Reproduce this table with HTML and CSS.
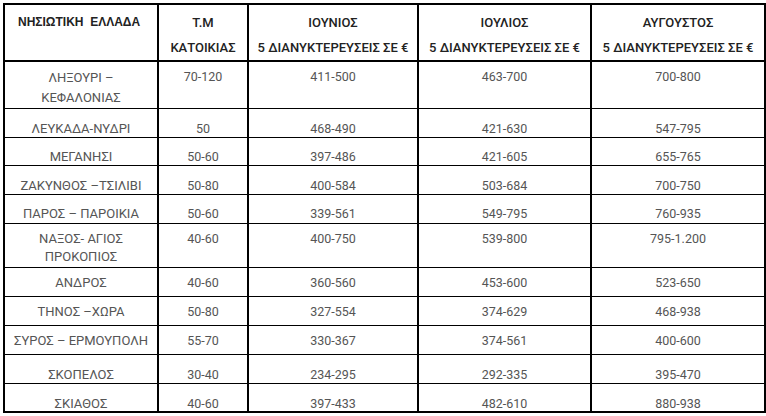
FILE: index.html
```html
<!DOCTYPE html>
<html lang="el">
<head>
<meta charset="utf-8">
<title>Νησιωτική Ελλάδα</title>
<link rel="stylesheet" href="styles.css">
</head>
<body>
<table class="prices">
  <colgroup>
    <col class="c-name">
    <col class="c-area">
    <col class="c-month1">
    <col class="c-month2">
    <col class="c-month3">
  </colgroup>
  <thead>
    <tr>
      <th class="h-first">ΝΗΣΙΩΤΙΚΗ&nbsp; ΕΛΛΑΔΑ</th>
      <th>Τ.Μ<br>ΚΑΤΟΙΚΙΑΣ</th>
      <th>ΙΟΥΝΙΟΣ<br>5 ΔΙΑΝΥΚΤΕΡΕΥΣΕΙΣ ΣΕ €</th>
      <th>ΙΟΥΛΙΟΣ<br>5 ΔΙΑΝΥΚΤΕΡΕΥΣΕΙΣ ΣΕ €</th>
      <th>ΑΥΓΟΥΣΤΟΣ<br>5 ΔΙΑΝΥΚΤΕΡΕΥΣΕΙΣ ΣΕ €</th>
    </tr>
  </thead>
  <tbody>
    <tr class="r-lixouri">
      <td class="name">ΛΗΞΟΥΡΙ –<br>ΚΕΦΑΛΟΝΙΑΣ</td><td>70-120</td><td>411-500</td><td>463-700</td><td>700-800</td>
    </tr>
    <tr class="r-lefkada">
      <td class="name">ΛΕΥΚΑΔΑ-ΝΥΔΡΙ</td><td>50</td><td>468-490</td><td>421-630</td><td>547-795</td>
    </tr>
    <tr class="r-meganisi">
      <td class="name">ΜΕΓΑΝΗΣΙ</td><td>50-60</td><td>397-486</td><td>421-605</td><td>655-765</td>
    </tr>
    <tr class="r-zakynthos">
      <td class="name">ΖΑΚΥΝΘΟΣ –ΤΣΙΛΙΒΙ</td><td>50-80</td><td>400-584</td><td>503-684</td><td>700-750</td>
    </tr>
    <tr class="r-paros">
      <td class="name">ΠΑΡΟΣ – ΠΑΡΟΙΚΙΑ</td><td>50-60</td><td>339-561</td><td>549-795</td><td>760-935</td>
    </tr>
    <tr class="r-naxos">
      <td class="name">ΝΑΞΟΣ- ΑΓΙΟΣ<br>ΠΡΟΚΟΠΙΟΣ</td><td>40-60</td><td>400-750</td><td>539-800</td><td>795-1.200</td>
    </tr>
    <tr class="r-mid">
      <td class="name">ΑΝΔΡΟΣ</td><td>40-60</td><td>360-560</td><td>453-600</td><td>523-650</td>
    </tr>
    <tr class="r-mid">
      <td class="name">ΤΗΝΟΣ –ΧΩΡΑ</td><td>50-80</td><td>327-554</td><td>374-629</td><td>468-938</td>
    </tr>
    <tr class="r-mid">
      <td class="name">ΣΥΡΟΣ – ΕΡΜΟΥΠΟΛΗ</td><td>55-70</td><td>330-367</td><td>374-561</td><td>400-600</td>
    </tr>
    <tr class="r-skopelos">
      <td class="name">ΣΚΟΠΕΛΟΣ</td><td>30-40</td><td>234-295</td><td>292-335</td><td>395-470</td>
    </tr>
    <tr class="r-skiathos">
      <td class="name">ΣΚΙΑΘΟΣ</td><td>40-60</td><td>397-433</td><td>482-610</td><td>880-938</td>
    </tr>
  </tbody>
</table>
</body>
</html>
```
FILE: styles.css
```css
html, body {
  margin: 0;
  padding: 0;
  background: #ffffff;
}

body {
  padding: 3px 0 0 3px;
}

.prices {
  border-collapse: collapse;
  table-layout: fixed;
  width: 761px;
  font-family: Roboto, "Liberation Sans", sans-serif;
  border: 2px solid #000;
}

.c-name { width: 154px; }
.c-area { width: 90px; }
.c-month1 { width: 170px; }
.c-month2 { width: 173px; }
.c-month3 { width: 174px; }

.prices th {
  border: 2px solid #000;
  vertical-align: top;
  text-align: center;
  font-weight: 500;
  font-size: 13px;
  color: #222;
  line-height: 25px;
  padding: 5px 2px 0;
  white-space: nowrap;
}

.prices th.h-first {
  font-family: "Liberation Sans", Arial, sans-serif;
  font-weight: bold;
  font-size: 12px;
  text-align: left;
  padding-left: 13px;
}

.prices td {
  border-left: 2px solid #000;
  border-right: 2px solid #000;
  border-top: 1px solid #000;
  border-bottom: 1px solid #000;
  text-align: center;
  vertical-align: top;
  font-size: 12.5px;
  font-weight: 400;
  color: #555;
  line-height: 16px;
  white-space: nowrap;
  padding: 0 2px;
}

.prices td.name {
  font-size: 13px;
}

.prices tr.r-lixouri td {
  padding-top: 6px;
  padding-bottom: 0;
  line-height: 18px;
}

.prices tr.r-lixouri td.name {
  line-height: 20px;
}

.prices tr.r-lefkada td {
  padding-top: 12px;
  padding-bottom: 0;
}

.prices tr.r-meganisi td {
  padding-top: 11px;
  padding-bottom: 0;
}

.prices tr.r-zakynthos td {
  padding-top: 12px;
  padding-bottom: 0;
}

.prices tr.r-paros td {
  padding-top: 11px;
  padding-bottom: 1px;
}

.prices tr.r-naxos td {
  padding-top: 6px;
  padding-bottom: 1px;
  line-height: 18px;
}

.prices tr.r-mid td {
  padding-top: 7px;
  padding-bottom: 5px;
}

.prices tr.r-skopelos td {
  padding-top: 12px;
  padding-bottom: 0;
}

.prices tr.r-skiathos td {
  padding-top: 13px;
  padding-bottom: 0;
  line-height: 14px;
}
```
